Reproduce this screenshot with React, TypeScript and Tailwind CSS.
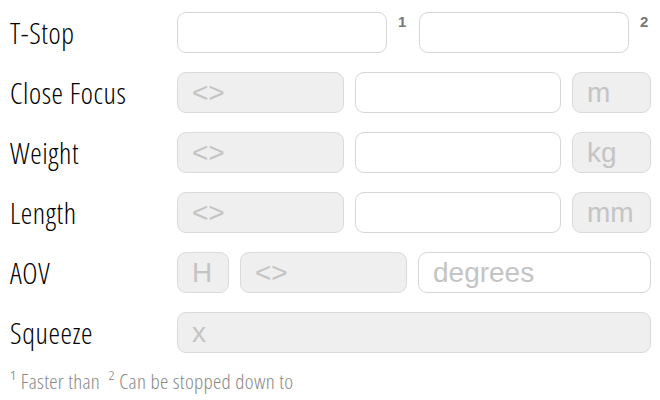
function Field({ w, gray, text }: { w: string; gray?: boolean; text?: string }) {
  return (
    <div
      className={`${w} h-[41px] rounded-[9px] border flex items-center pl-[14px] text-[28px] leading-none text-[#c4c4c4] font-['Liberation_Sans',sans-serif] ${
        gray ? 'bg-[#efefef] border-[#dadada]' : 'bg-white border-[#d7d7d7]'
      }`}
    >
      {text}
    </div>
  );
}

function Row({ label, children }: { label: string; children: React.ReactNode }) {
  return (
    <div className="flex items-center h-[41px]">
      <div className="w-[167px] text-[29px] text-black leading-none tracking-[0.6px] font-['Open_Sans',sans-serif] font-light font-stretch-condensed">
        {label}
      </div>
      <div className="flex-1 flex gap-[11px] h-full">{children}</div>
    </div>
  );
}

function Sup({ n }: { n: string }) {
  return (
    <div className="w-[10px] self-start pt-[2px] text-[15px] font-bold text-[#777] leading-none font-['Liberation_Sans',sans-serif]">
      {n}
    </div>
  );
}

export default function App() {
  return (
    <div className="w-[660px] h-[400px] bg-white pl-[10px] pr-[9px] pt-[12px] flex flex-col gap-[19px]">
      <Row label="T-Stop">
        <Field w="w-[210px]" />
        <Sup n="1" />
        <Field w="w-[210px]" />
        <Sup n="2" />
      </Row>
      <Row label="Close Focus">
        <Field w="w-[167px]" gray text="<>" />
        <Field w="w-[206px]" />
        <Field w="flex-1" gray text="m" />
      </Row>
      <Row label="Weight">
        <Field w="w-[167px]" gray text="<>" />
        <Field w="w-[206px]" />
        <Field w="flex-1" gray text="kg" />
      </Row>
      <Row label="Length">
        <Field w="w-[167px]" gray text="<>" />
        <Field w="w-[206px]" />
        <Field w="flex-1" gray text="mm" />
      </Row>
      <Row label="AOV">
        <Field w="w-[52px]" gray text="H" />
        <Field w="w-[167px]" gray text="<>" />
        <Field w="flex-1" text="degrees" />
      </Row>
      <Row label="Squeeze">
        <Field w="flex-1" gray text="x" />
      </Row>
      <div className="text-[21px] text-[#888] leading-none tracking-[0.3px] -mt-[1px] font-['Open_Sans',sans-serif] font-light font-stretch-condensed">
        ¹ Faster than&nbsp; ² Can be stopped down to
      </div>
    </div>
  );
}
